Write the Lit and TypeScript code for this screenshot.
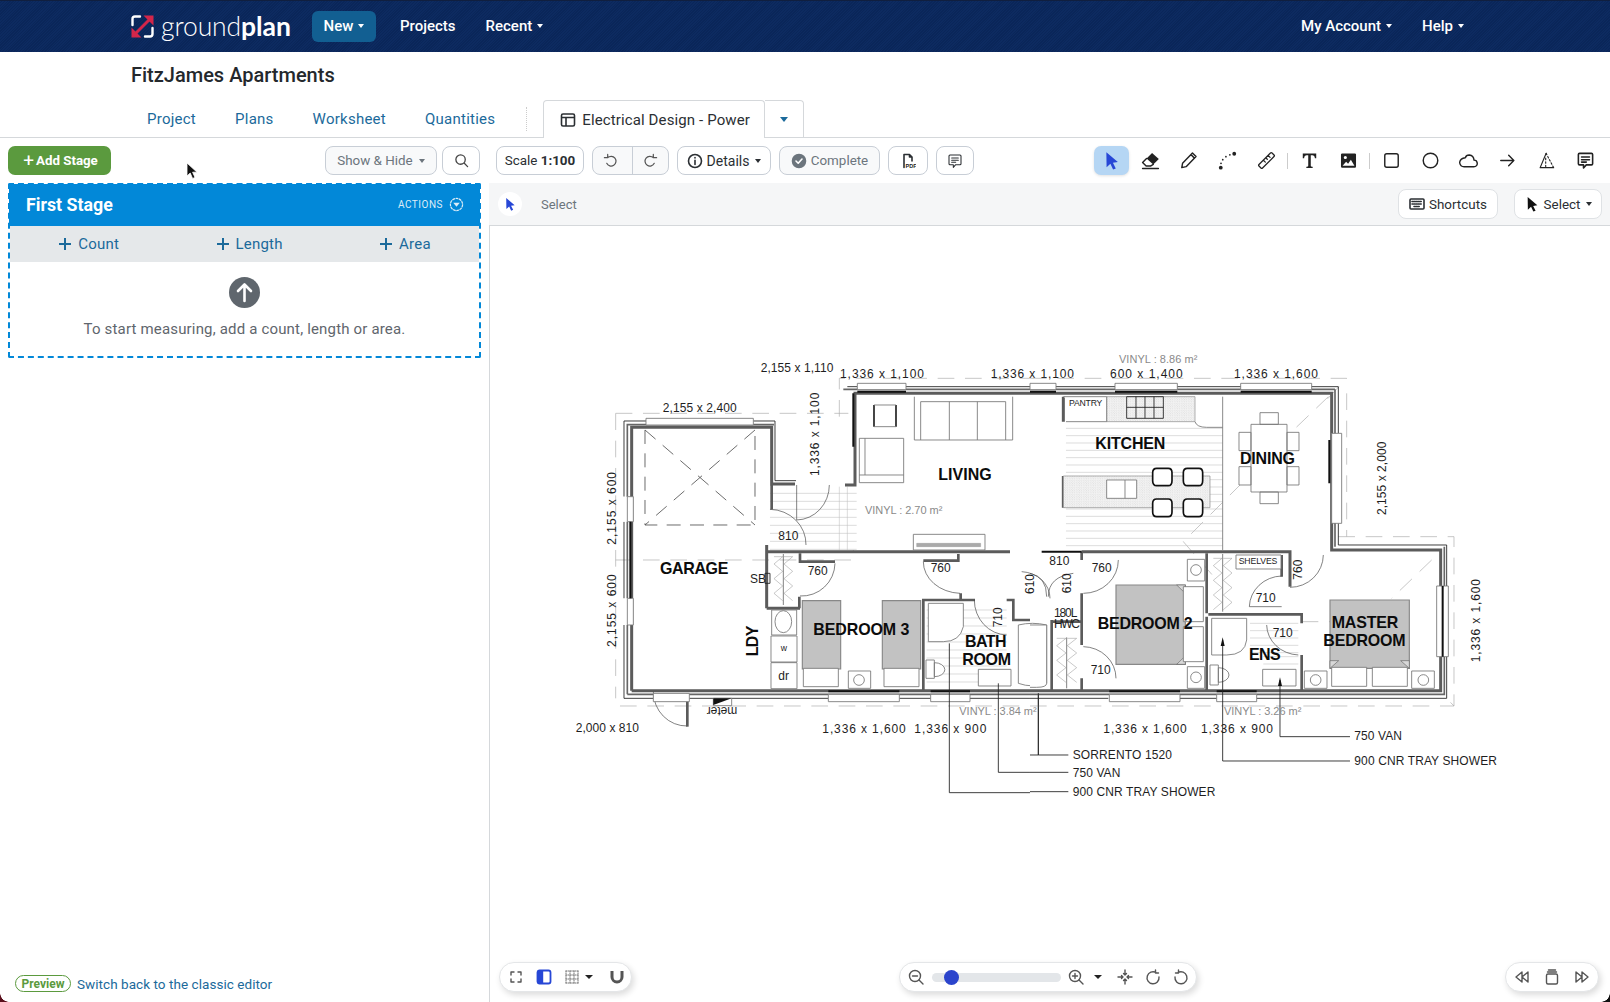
import { LitElement, html, css, svg } from "lit";
import { customElement } from "lit/decorators.js";

type P = [string, string];
const hatch = (x1: number, x2: number, y1: number, y2: number, s: number) => {
  let d = "";
  for (let y = y1; y <= y2; y += s) d += `M${x1} ${y}H${x2}`;
  return d;
};
const zig = (x1: number, x2: number, y1: number, y2: number, s: number) => {
  let d = `M${x1} ${y1}`;
  let i = 0;
  for (let y = y1; y <= y2; y += s) d += `L${i++ % 2 ? x1 : x2} ${y}`;
  return d;
};

const plan1: P[] = [
  ["dash", "M137 190H835M137 190V1045M137 630H850V600M808 200V85H1380M150 1068H1380"],
  ["hatch", hatch(600, 860, 430, 600, 24) + "M808 410V600M832 410V600"],
  ["hatch", hatch(1070, 1310, 780, 1010, 24)],
  ["robe", zig(612, 638, 620, 760, 22) + zig(642, 668, 620, 760, 22)],
  ["thin", "M640 612V765"],
  ["band", "M172 1033V224H612M172 1033H1380M820 118H1380"],
  ["wall", "M185 1022V232H605V402H675M825 405H855V130H1380M590 775V585M590 605H1320M590 775H690M185 1022H1380"],
  ["wallt", "M1060 1020V750H1215M1310 750H1330V810H1380M1172 730V750M1165 612V632H1060M690 610V635H795M688 740V775M605 478V405"],
  ["ink", "M162 440V213H228M550 213H615V392H678M162 1045H250M358 1045H775M988 1045H1082M1200 1045H1380M832 110H862M1008 110H1380M162 515V1045"],
  ["white", "M172 440V515M172 745V825M183 440V515M183 745V825M162 440V515M162 745V825"],
  ["fur", "M172 440H190V515H172ZM172 745H190V825H172Z"],
  ["thin", "M600 478A110 105 0 0 1 708 585M778 405A100 105 0 0 1 680 510V405M795 640A100 100 0 0 1 690 738M1060 635A115 95 0 0 0 1170 730M1213 750A100 105 0 0 0 1310 855M250 1025A100 103 0 0 0 352 1128M1355 665A90 80 0 0 1 1440 745"],
  ["wallt", "M352 1130V1030"],
  ["roof", "M225 240V525H555V240M225 240L555 525M555 240L225 525"],
  ["fur", "M862 100H1008V119H862ZM228 205H550V225H228ZM775 1033H988V1055H775ZM1082 1033H1200V1055H1082ZM250 1030H358V1055H250Z"],
  ["bar", "M181 515V745M850 130V290M862 125H1008M775 1024H988M1082 1024H1200"],
  ["fur", "M868 265H1001V398H868ZM868 375H1001M885 265V375M1033 140V270H1328V140M1052 155H1307M1052 155V270M1138 155V270M1222 155V270M1307 155V270"],
  ["inkb", "M912 165V230M978 165V230"],
  ["fur", "M912 165H978M912 230H978"],
  ["ink", "M585 670H600V700H585Z"],
  ["fur", "M1030 553H1245V600H1030ZM605 780H680V855H605ZM603 858H681V936H603ZM603 938H681V1016H603Z"],
  ["grayb", "M1040 580H1232V590H1040Z"],
  ["fur", "M640 782A25 33 0 1 0 640 848A25 33 0 1 0 640 782Z"],
  ["fur", "M835 963H902V1015H835ZM1225 958H1323V1008H1225ZM1345 825Q1387 815 1430 825V1000Q1387 1015 1345 1000ZM1075 760H1180V830Q1170 875 1120 875H1075ZM1068 930H1093V985H1068ZM1093 938A30 20 0 1 1 1093 980Z"],
  ["bed", "M697 752H812V957H697ZM937 752H1052V957H937Z"],
  ["fur", "M700 955H805V1010H700ZM942 955H1047V1010H942Z"],
  ["ink", "M1138 880V1328H1380M1285 1000V1267H1380M1405 1030V1215H1380"],
  ["fur", "M430 1045H485V1067H430Z"],
  ["solid", "M430 1045H485L430 1065Z"],
];

const plan2: P[] = [
  ["dash", "M0 85H950L880 160M950 130V560M925 560H1272V1068L1245 1040M0 1068H1272M895 140L780 250M635 400L460 575L560 690M1205 630L1085 745M815 815H900"],
  ["hatch", hatch(108, 578, 235, 600, 22)],
  ["hatch", hatch(660, 805, 820, 915, 22) + hatch(700, 805, 920, 950, 22)],
  ["robe", zig(550, 576, 625, 780, 22) + zig(580, 606, 625, 780, 22) + zig(80, 108, 865, 1010, 22) + zig(112, 140, 865, 1010, 22)],
  ["thin", "M578 612V785M110 862V1015"],
  ["band", "M915 118V590M1243 590V1033H0M0 118H915"],
  ["wall", "M0 130H905V600H1232V1022H0M155 605H780V710M100 140V215M100 378V473"],
  ["wallt", "M155 605V630M530 610V790M535 793H815V820M815 915V1020M65 810V1020M65 815H155M155 730V885M155 985V1020M530 800V1020M755 615V680"],
  ["ink", "M0 110H925V250M925 520V585H1250V1045H680M560 1045H450M235 1045H0"],
  ["fur", "M0 100H78V119H0ZM255 100H442V119H255ZM632 100H845V119H632ZM238 1033H450V1055H238ZM560 1033H680V1055H560ZM905 250H935V520H905ZM1220 708H1255V920H1220Z"],
  ["bar", "M0 125H78M255 125H442M632 125H845M1238 708V920M898 270V400M238 1024H450M560 1024H680M35 605H155"],
  ["counter", "M230 140H495V215H230ZM100 378H540V473H100Z"],
  ["fur", "M108 215H230M495 215Q500 232 530 232H578M578 140V600M100 140H230V215M230 390H320V445H230ZM285 390V445M618 615H753V657H618Z"],
  ["ink", "M290 140H400V205H290ZM345 140V205M290 172H400M318 140V205M372 140V205"],
  ["stool", "M380 355H415Q426 355 426 368V392Q426 407 415 407H380Q368 407 368 392V368Q368 355 380 355ZM472 355H507Q518 355 518 368V392Q518 407 507 407H472Q460 407 460 392V368Q460 355 472 355ZM380 447H415Q426 447 426 460V486Q426 500 415 500H380Q368 500 368 486V460Q368 447 380 447ZM472 447H507Q518 447 518 460V486Q518 500 507 500H472Q460 500 460 486V460Q460 447 472 447Z"],
  ["fur", "M663 223H771V426H663ZM690 188H745V223H690ZM690 426H745V461H690ZM627 247H663V302H627ZM627 350H663V405H627ZM771 247H807V302H771ZM771 350H807V405H771Z"],
  ["bed", "M258 705H466V943H258ZM900 750H1138V955H900Z"],
  ["fold", "M440 705H466V730ZM440 943H466V918ZM900 955V932H926ZM1138 955V932H1112Z"],
  ["fur", "M460 710H520V815H460ZM460 830H520V935H460ZM472 628H524V693H472ZM472 950H524V1015H472ZM905 952H1010V1009H905ZM1027 952H1132V1009H1027ZM823 963H891V1015H823ZM1145 963H1213V1015H1145Z"],
  ["fur", "M545 805H650V870Q645 915 590 915H545ZM540 945H565V1005H540ZM565 953A32 22 0 1 1 565 997ZM698 958H798V1008H698ZM0 825H50V1000Q50 1012 20 1012H0"],
  ["thin", "M265 630A105 100 0 0 1 160 730M160 890A100 95 0 0 1 258 985M780 712A100 98 0 0 0 880 615M755 678A100 95 0 0 0 658 770H755M710 825A100 92 0 0 0 805 915M50 740Q50 680 0 670M55 740Q55 680 130 670"],
  ["ink", "M578 870V1233H960M750 990V1160H960M25 1030V1215H115M0 1267H115M0 1325H115"],
  ["solid", "M578 862L572 888H584ZM750 982L744 1008H756Z"],
];

const circles1: [number, number, number][] = [[867, 990, 16]];
const circles2: [number, number, number][] = [[498, 660, 16], [498, 982, 16], [857, 990, 16], [1180, 990, 16]];

type T = [string, number, number, string?, number?];
const bold1: T[] = [["GARAGE", 270, 672, "", 205], ["LIVING", 1105, 390, "", 160], ["BEDROOM 3", 730, 855, "", 288], ["BATH", 1185, 890, "", 125], ["ROOM", 1177, 945, "", 146]];
const bold2: T[] = [["KITCHEN", 196, 297, "", 210], ["DINING", 630, 342, "", 165], ["BEDROOM 2", 203, 836, "", 285], ["MASTER", 905, 833, "", 200], ["BEDROOM", 880, 887, "", 247], ["ENS", 657, 930, "", 95]];
const dim1: T[] = [
  ["2,155 x 1,110", 572, 67, "", 218], ["1,336 x 1,100", 810, 85, "", 252], ["1,336 x 1,100", 1262, 85, "", 250], ["2,155 x 2,400", 278, 185, "", 222],
  ["2,000 x 810", 17, 1145, "", 190], ["810", 625, 571], ["760", 713, 675], ["760", 1082, 665],
  ["1,336 x 1,600", 757, 1149, "", 250], ["1,336 x 900", 1033, 1149, "", 216], ["dr", 625, 989], ["SB", 540, 699],
];
const dim2: T[] = [
  ["600 x 1,400", 240, 85, "", 218], ["1,336 x 1,600", 612, 85, "", 252], ["810", 58, 645], ["760", 185, 666], ["710", 677, 757], ["710", 728, 861], ["710", 182, 972],
  ["1,336 x 1,600", 220, 1149, "", 250], ["1,336 x 900", 513, 1149, "", 216], ["750 VAN", 973, 1171, "", 143], ["900 CNR TRAY SHOWER", 973, 1246, "", 428],
  ["SORRENTO 1520", 128, 1227, "", 298], ["750 VAN", 128, 1280, "", 143], ["900 CNR TRAY SHOWER", 128, 1338, "", 428],
  ["180L", 72, 800, "", 70], ["HWC", 72, 835, "", 78],
];
const rot1: T[] = [["1,336 x 1,100", 735, 253, "", 250], ["2,155 x 600", 125, 475, "", 218], ["2,155 x 600", 125, 782, "", 218], ["710", 1283, 805], ["610", 1380, 705], ["LDY", 552, 873, "b", 92]];
const rot2: T[] = [["2,155 x 2,000", 1055, 385, "", 220], ["1,336 x 1,600", 1338, 812, "", 250], ["610", 110, 703], ["760", 805, 662]];
const vinyl1: T[] = [["VINYL : 2.70 m²", 885, 491, "", 232], ["VINYL : 3.84 m²", 1168, 1095, "", 232]];
const vinyl2: T[] = [["VINYL : 8.86 m²", 267, 40, "", 235], ["VINYL : 3.26 m²", 582, 1095, "", 232]];

const drawPaths = (a: P[]) =>
  a.map(([c, d]) => (c === "counter" ? svg`<path class="cnt" fill="url(#sp)" d=${d}></path>` : svg`<path class=${c} d=${d}></path>`));
const drawText = (a: T[], cls: string) =>
  a.map(([s, x, y, , w]) => (w ? svg`<text class=${cls} x=${x} y=${y} textLength=${w}>${s}</text>` : svg`<text class=${cls} x=${x} y=${y}>${s}</text>`));
const drawRot = (a: T[]) =>
  a.map(([s, x, y, k, w]) =>
    w
      ? svg`<text class=${k ? "lbl" : "dim"} x=${x - w / 2} y=${y + 12} textLength=${w} transform="rotate(-90 ${x} ${y})">${s}</text>`
      : svg`<text class="dim" x=${x - 27} y=${y + 12} transform="rotate(-90 ${x} ${y})">${s}</text>`,
  );
const drawCircles = (a: [number, number, number][]) =>
  a.map(([x, y, r]) => svg`<circle class="fur" cx=${x} cy=${y} r=${r}></circle>`);

const caret = html`<span class="caret"></span>`;

const ic = (inner: unknown) => html`<svg class="ic" viewBox="0 0 24 24">${inner}</svg>`;

const arrowD = "M5.5 1.5L20 14L13.8 14.9L17.4 22L14 23.4L10.6 16.2L5.8 20.5Z";

const tools = [
  svg`<path fill="#2747d6" stroke="none" d=${arrowD}/>`,
  svg`<path fill="#222" stroke="none" d="M14 2.5L22.5 10L15.5 17L7 9.5Z"/><path d="M7 9.5L2 14.5L6.5 19H12L15.5 17M2 22H22"/>`,
  svg`<path d="M3.5 21L4.5 15.5L17 2.5L21.5 7L9 19.8ZM15 4.5L19.5 9"/>`,
  svg`<g fill="#222" stroke="none"><circle cx="3.5" cy="21" r="2.4"/><circle cx="3.8" cy="15.5" r="1.1"/><circle cx="6" cy="11" r="1.1"/><circle cx="10" cy="7.2" r="1.1"/><circle cx="15" cy="4.8" r="1.1"/><circle cx="20.5" cy="3.5" r="2.4"/></g>`,
  svg`<path stroke-width="1.6" d="M2.5 17L17 2.5Q18 1.5 19 2.5L21.5 5Q22.5 6 21.5 7L7 21.5Q6 22.5 5 21.5L2.5 19Q1.5 18 2.5 17ZM8 11.5L10.5 14M11 8.5L13 10.5M14 5.5L16.5 8"/>`,
  null,
  svg`<path fill="#222" stroke="none" d="M3.5 3H20.5V9H18.8C18.5 6.5 17.5 5.5 15.5 5.5H13.6V18.5C13.6 19.5 14.6 19.8 16 19.9V21.5H8V19.9C9.4 19.8 10.4 19.5 10.4 18.5V5.5H8.5C6.5 5.5 5.5 6.5 5.2 9H3.5Z"/>`,
  svg`<path fill="#222" stroke="none" fill-rule="evenodd" d="M4 3H20Q21.5 3 21.5 4.5V19.5Q21.5 21 20 21H4Q2.5 21 2.5 19.5V4.5Q2.5 3 4 3ZM4.5 18.5H19.5L15 11L11.5 16L9 13.5ZM8 6.2A2 2 0 1 0 8 10.2A2 2 0 1 0 8 6.2Z"/>`,
  null,
  svg`<rect x="3.5" y="3.5" width="17" height="17" rx="2.5"/>`,
  svg`<circle cx="12" cy="12" r="9.2"/>`,
  svg`<path d="M6.5 20H18.5Q23.5 19.5 23 15Q22.5 11.5 19 11.5Q18.5 5.5 13 5Q9 5 8 8.5Q1.5 9 .8 14.5Q1.5 19.5 6.5 20Z"/>`,
  svg`<path d="M3.5 12H20M13.5 5.5L20 12L13.5 18.5"/>`,
  svg`<path d="M11.5 3L4 21H21" stroke-width="1.5"/><path d="M11.5 3L21 21M11 9V21" stroke-width="1.4" stroke-dasharray="2 2.5"/>`,
  svg`<path stroke-width="2" d="M4.5 3H19.5Q21 3 21 4.5V16Q21 17.5 19.5 17.5H13L9.5 21.5V17.5H4.5Q3 17.5 3 16V4.5Q3 3 4.5 3ZM7 7.5H17M7 11H17M7 14H13"/>`,
];

@customElement("app-root")
export class AppRoot extends LitElement {
  static styles = css`
    :host {
      display: block;
      height: 100vh;
      overflow: hidden;
      background: #fff;
      font-family: "Roboto", "Liberation Sans", sans-serif;
      color: #2b2f33;
      --line: #d5d8db;
    }
    .page { display: flex; flex-direction: column; height: 100%; position: relative; }
    .corner { position: absolute; bottom: 0; width: 9px; height: 9px; }
    .corner.cl { left: 0; background: radial-gradient(circle at 100% 0, transparent 8.5px, #5a0f1c 9px); }
    .corner.cr { right: 0; background: radial-gradient(circle at 0 0, transparent 8.5px, #111 9px); }
    .top {
      height: 52px; flex: none; display: flex; align-items: center; padding-left: 131px; padding-right: 146px;
      background-color: #0a2659;
      background-image: repeating-linear-gradient(135deg, rgba(30, 70, 140, .14) 0 1px, transparent 1px 2px);
      border-top: 1px solid #101f3f; box-sizing: border-box; color: #fff; font-size: 15px; font-weight: 500;
    }
    .logo { display: flex; align-items: center; gap: 7px; width: 181px; }
    .logo svg { width: 23px; height: 23px; flex: none; }
    .logo span { font-family: "Lato", sans-serif; font-weight: 300; font-size: 26.5px; letter-spacing: -.1px; line-height: 1; }
    .logo b { font-weight: 700; }
    .new { width: 64px; height: 31px; box-sizing: border-box; padding-bottom: 2px; display: flex; align-items: center; justify-content: center; gap: 3px; border-radius: 6px; background: #125f92; }
    .nav { display: flex; align-items: center; gap: 3px; padding-bottom: 2px; }
    .nav.p { margin-left: 24px; }
    .nav.r { margin-left: 30px; }
    .spacer { flex: 1; }
    .nav.h { margin-left: 30px; }
    .caret { display: inline-block; border-left: 3.5px solid transparent; border-right: 3.5px solid transparent; border-top: 4px solid currentColor; margin-left: 2px; }
    .title { height: 48px; flex: none; padding-left: 131px; font-size: 20px; font-weight: 500; line-height: 47px; color: #24282c; }
    .tabs { height: 37px; flex: none; display: flex; align-items: center; padding-left: 147px; border-bottom: 1px solid var(--line); box-sizing: content-box; color: #1b6a9b; font-size: 15px; letter-spacing: .25px; }
    .tabs a { margin-right: 39px; }
    .tabs .sep { width: 0; height: 24px; border-left: 1px dotted #ccc; margin-left: -8px; margin-right: 16px; }
    .tab { height: 38px; display: flex; align-items: center; box-sizing: border-box; border: 1px solid var(--line); border-bottom: 0; background: #fff; border-radius: 4px 4px 0 0; margin-bottom: -1px; color: #2b2f33; padding-left: 16px; width: 222px; gap: 6px; letter-spacing: .12px; }
    .tab svg { width: 16px; height: 16px; fill: none; stroke: #2b2f33; stroke-width: 1.6; flex: none; }
    .tabdd { height: 37px; width: 39px; display: flex; align-items: center; justify-content: center; box-sizing: border-box; border: 1px solid var(--line); border-left: 0; border-bottom: 0; border-radius: 0 4px 0 0; color: #1b6a9b; }
    .tabdd .caret { border-left-width: 4.5px; border-right-width: 4.5px; border-top-width: 5px; margin: 0; }
    .bar { height: 45px; flex: none; display: flex; }
    .barl { width: 489px; flex: none; display: flex; align-items: center; box-sizing: border-box; padding: 0 9px 0 8px; gap: 5px; position: relative; }
    .barr { flex: 1; display: flex; align-items: center; padding-left: 7px; padding-right: 7.5px; gap: 8px; }
    .add { width: 103px; height: 29px; box-sizing: border-box; padding: 0 0 1px 2px; border-radius: 7px; background: #5b9a3e; color: #fff; font-weight: 700; font-size: 13.3px; display: flex; align-items: center; justify-content: center; gap: 2px; margin-right: auto; }
    .add i { font-style: normal; font-size: 19px; font-weight: 400; line-height: 1; }
    .btn { height: 29px; box-sizing: border-box; border: 1px solid #c8ced6; border-radius: 8px; background: #fff; display: flex; align-items: center; justify-content: center; font-size: 13.4px; color: #2b2f33; gap: 4px; }
    .btn.mut { background: #f8f9fa; color: #6c757d; }
    .btn svg { width: 16px; height: 16px; fill: none; stroke: #2b2f33; stroke-width: 1.6; stroke-linecap: round; stroke-linejoin: round; flex: none; }
    .btn.mut svg { stroke: #6c757d; }
    .w112 { width: 112px; } .w38 { width: 38px; } .w88 { width: 88px; } .w95 { width: 94px; font-size: 14px; } .w101 { width: 101px; } .w40 { width: 40px; }
    .btn b { font-weight: 700; }
    .seg { width: 77px; display: flex; padding: 0; background: #f8f9fa; }
    .seg span { flex: 1; display: flex; align-items: center; justify-content: center; height: 100%; }
    .seg span + span { border-left: 1px solid #c8ced6; }
    .btn.seg svg { stroke: #555; stroke-width: 1.3; width: 15px; height: 15px; }
    .btn.srch svg { stroke: #444; stroke-width: 1.4; width: 15px; height: 15px; }
    .cur { position: absolute; left: 186px; top: 24px; width: 13px; height: 18px; }
    .tools { margin-left: auto; display: flex; align-items: center; gap: 3.7px; }
    .tool { width: 35px; height: 29px; border-radius: 7px; display: flex; align-items: center; justify-content: center; }
    .tool.on { background: #b5d6f4; box-shadow: 0 1px 3px rgba(0, 0, 0, .12); }
    .ic { width: 19px; height: 19px; fill: none; stroke: #222; stroke-width: 1.8; stroke-linecap: round; stroke-linejoin: round; }
    .vsep { width: 1px; height: 16px; background: #ccc; }
    .body { flex: 1; min-height: 0; display: flex; }
    .left { width: 489px; flex: none; box-sizing: border-box; padding: 0 8px 10px; display: flex; flex-direction: column; }
    .stage { height: 175px; box-sizing: border-box; border: 2px dashed #0288d8; display: flex; flex-direction: column; border-radius: 2px; }
    .stitle { height: 42px; margin: -1px -1px 0; flex: none; background: #0288d8; color: #fff; display: flex; align-items: center; padding: 0 16px 2px 17px; box-sizing: border-box; font-size: 17.8px; font-weight: 700; }
    .act { margin-left: auto; font-size: 10px; font-weight: 400; letter-spacing: .5px; color: #dcecf7; display: flex; align-items: center; gap: 6px; }
    .act svg { width: 15px; height: 15px; fill: none; stroke: #dcecf7; stroke-width: 1.3; }
    .act svg path { fill: #dcecf7; stroke: none; }
    .adds { height: 36px; flex: none; background: #e5e8ea; display: flex; justify-content: space-around; align-items: center; color: #1b6a9b; font-size: 15px; }
    .adds span { display: flex; align-items: center; gap: 6px; letter-spacing: .2px; }
    .adds svg { width: 14px; height: 14px; stroke: #1b6a9b; stroke-width: 2; }
    .empty { flex: 1; display: flex; flex-direction: column; align-items: center; padding-top: 15px; gap: 12px; color: #5f666d; font-size: 15px; letter-spacing: .17px; }
    .empty svg { width: 31px; height: 31px; }
    .foot { margin-top: auto; display: flex; align-items: center; font-size: 13.5px; color: #1b6a9b; gap: 6px; padding-left: 7px; letter-spacing: .05px; }
    .pv { height: 17px; width: 56px; box-sizing: border-box; border: 1px solid #5b9a3e; border-radius: 9px; color: #5b9a3e; font-size: 12px; font-weight: 700; display: flex; align-items: center; justify-content: center; letter-spacing: 0; }
    .right { flex: 1; min-width: 0; border-left: 1px solid var(--line); display: flex; flex-direction: column; }
    .sub { height: 43px; flex: none; box-sizing: border-box; background: #f5f6f7; border-bottom: 1px solid var(--line); margin-left: -1px; display: flex; align-items: center; padding-right: 8px; gap: 16px; font-size: 13px; }
    .selc { width: 24px; height: 24px; border-radius: 50%; background: #fff; margin-left: 9px; display: flex; align-items: center; justify-content: center; }
    .selc svg { width: 14px; height: 14px; }
    .sub .lab { color: #6c757d; margin-left: 3px; margin-right: auto; font-size: 13px; }
    .sub .btn { height: 30px; color: #2b2f33; border-color: #dfe2e5; background: #fff; }
    .w100 { width: 100px; } .w88b { width: 88px; }
    .canvas { flex: 1; min-height: 0; position: relative; }
    .plan { position: absolute; inset: 0; width: 100%; height: 100%; }
    .plan path:not(.cnt) { fill: none; }
    .plan .cnt { stroke: #888; stroke-width: 2; }
    .dash { stroke: #aaa; stroke-width: 2; stroke-dasharray: 50 32; }
    .hatch { stroke: #bdbdbd; stroke-width: 1.6; }
    .robe { stroke: #999; stroke-width: 1.6; }
    .thin { stroke: #444; stroke-width: 2; }
    .ink { stroke: #222; stroke-width: 2.6; }
    .inkb { stroke: #222; stroke-width: 5; }
    .band { stroke: #666; stroke-width: 5; }
    .wall { stroke: #5b5b5b; stroke-width: 9; }
    .wallt { stroke: #5b5b5b; stroke-width: 8; }
    .white { stroke: #fff; stroke-width: 12; }
    path.bar { stroke: #111; stroke-width: 6; }
    .roof { stroke: #555; stroke-width: 2.6; stroke-dasharray: 42 28; }
    .fur { stroke: #777; stroke-width: 2.6; }
    .plan path.fur { fill: #fff; }
    .plan path.grayb { fill: #aaa; stroke: #888; stroke-width: 1; }
    .plan path.bed { fill: #c2c2c2; stroke: #888; stroke-width: 3.5; }
    .plan path.stool { stroke: #111; stroke-width: 5; fill: #fff; }
    .plan path.fold { fill: #d8d8d8; stroke: #666; stroke-width: 2; }
    .plan path.solid { fill: #111; }
    .plan circle.fur { fill: none; }
    .plan text { font-family: "Liberation Sans", Arial, sans-serif; }
    .dim { font-size: 36px; fill: #1e1e1e; }
    .lbl { font-size: 48px; font-weight: 700; fill: #0c0c0c; }
    .vin { font-size: 33px; fill: #8a8a8a; }
    .small { font-size: 26px; fill: #222; }
    .pill { position: absolute; bottom: 10px; height: 30px; box-sizing: border-box; background: #fff; border: 1px solid #e4e6e8; border-radius: 15px; box-shadow: 2px 3px 6px rgba(0, 0, 0, .14); display: flex; align-items: center; padding-left: 8px; }
    .pa { left: 9px; width: 133px; }
    .pb { left: 409px; width: 298px; }
    .pc { right: 11px; width: 94px; padding: 0 8px; justify-content: space-between; }
    .pill svg { width: 16px; height: 16px; fill: none; stroke: #555; stroke-width: 1.4; stroke-linecap: round; stroke-linejoin: round; flex: none; }
    .pill svg.grid { stroke: #777; stroke-width: 1; }
    .pill svg.mag { stroke: #555; stroke-width: 3; stroke-linecap: butt; }
    .pill .dd { display: inline-block; flex: none; border-left: 4px solid transparent; border-right: 4px solid transparent; border-top: 4px solid #222; }
    .m5 { margin-left: 5px; } .m7 { margin-left: 7px; } .m8 { margin-left: 8px; } .m10 { margin-left: 10px; } .m12 { margin-left: 12px; } .m15 { margin-left: 15px; } .m16 { margin-left: 16px; }
    .slider { width: 129px; height: 9px; flex: none; border-radius: 5px; background: #e3e6e9; position: relative; }
    .slider i { position: absolute; left: 12px; top: -3px; width: 15px; height: 15px; border-radius: 50%; background: #2b44cc; }
  `;

  render() {
    return html`<div class="page">
      <div class="top">
        <div class="logo">
          <svg viewBox="0 0 23 23" fill="none" stroke-linecap="round">
            <path stroke="#fff" stroke-width="2.4" d="M9 1.5H4Q1.5 1.5 1.5 4V10M14 21.5H19Q21.5 21.5 21.5 19V13"/>
            <path stroke="#d3264a" stroke-width="3" d="M5 18L18 5"/>
            <path fill="#d3264a" d="M12.5 .5H22.5V10.5ZM.5 22.5V12.5L10.5 22.5Z"/>
          </svg>
          <span>ground<b>plan</b></span>
        </div>
        <div class="new">New${caret}</div>
        <div class="nav p">Projects</div>
        <div class="nav r">Recent${caret}</div>
        <div class="spacer"></div>
        <div class="nav">My Account${caret}</div>
        <div class="nav h">Help${caret}</div>
      </div>
      <div class="title">FitzJames Apartments</div>
      <div class="tabs">
        <a>Project</a><a>Plans</a><a>Worksheet</a><a>Quantities</a><span class="sep"></span>
        <div class="tab">
          <svg viewBox="0 0 16 16"><rect x="1.5" y="2" width="13" height="12" rx="1.5"/><path d="M1.5 5.5H14.5M6 5.5V14"/></svg>
          Electrical Design - Power
        </div>
        <div class="tabdd">${caret}</div>
      </div>
      <div class="bar">
        <div class="barl">
          <div class="add"><i>+</i>Add Stage</div>
          <div class="btn mut w112">Show &amp; Hide${caret}</div>
          <div class="btn w38 srch"><svg viewBox="0 0 16 16"><circle cx="7" cy="7" r="5"/><path d="M11 11L14.5 14.5"/></svg></div>
          <svg class="cur" viewBox="0 0 13 18"><path fill="#111" stroke="#fff" stroke-width=".8" d="M1 1L1 14L4.2 11L6.6 16.5L9 15.4L6.6 10.2H11Z"/></svg>
        </div>
        <div class="barr">
          <div class="btn w88"><span>Scale <b>1:100</b></span></div>
          <div class="btn seg">
            <span><svg viewBox="0 0 16 16"><path d="M5 5A5.2 5.2 0 1 1 4 11M5 1.5V5H1.5"/></svg></span>
            <span><svg viewBox="0 0 16 16"><path d="M11 5A5.2 5.2 0 1 0 12 11M11 1.5V5H14.5"/></svg></span>
          </div>
          <div class="btn w95"><svg viewBox="0 0 16 16"><circle cx="8" cy="8" r="6.5"/><path d="M8 7.2V11.5M8 4.6V4.9"/></svg>Details${caret}</div>
          <div class="btn mut w101"><svg viewBox="0 0 16 16"><circle cx="8" cy="8" r="6.5" fill="#6c757d"/><path stroke="#fff" d="M5 8L7.2 10.2L11 6"/></svg>Complete</div>
          <div class="btn w40"><svg viewBox="0 0 16 16"><path d="M4 14.5V1.5H9.5L12 4V8M12 4H9.5V1.5"/><text x="5.5" y="15" font-size="5.5" font-weight="700" font-family="Liberation Sans" fill="#222" stroke="none">PDF</text></svg></div>
          <div class="btn w38"><svg viewBox="0 0 24 24" stroke-width="2.2"><path d="M4.5 3H19.5Q21 3 21 4.5V16Q21 17.5 19.5 17.5H13L9.5 21.5V17.5H4.5Q3 17.5 3 16V4.5Q3 3 4.5 3ZM7 7.5H17M7 11H17M7 14H13"/></svg></div>
          <div class="tools">
            ${tools.map((t, i) => (t === null ? html`<span class="vsep"></span>` : html`<span class="tool ${i === 0 ? "on" : ""}">${ic(t)}</span>`))}
          </div>
        </div>
      </div>
      <div class="body">
        <div class="left">
          <div class="stage">
            <div class="stitle">First Stage
              <span class="act">ACTIONS <svg viewBox="0 0 16 16"><circle cx="8" cy="8" r="6.5" stroke-dasharray="3 .6"/><path d="M4.5 6H11.5L8 10.5Z"/></svg></span>
            </div>
            <div class="adds">
              <span><svg viewBox="0 0 14 14"><path d="M7 1V13M1 7H13"/></svg>Count</span>
              <span><svg viewBox="0 0 14 14"><path d="M7 1V13M1 7H13"/></svg>Length</span>
              <span><svg viewBox="0 0 14 14"><path d="M7 1V13M1 7H13"/></svg>Area</span>
            </div>
            <div class="empty">
              <svg viewBox="0 0 31 31"><circle cx="15.5" cy="15.5" r="15.5" fill="#5f666d"/><path fill="none" stroke="#fff" stroke-width="2.6" stroke-linecap="round" stroke-linejoin="round" d="M15.5 24V8M9 14L15.5 7.5L22 14"/></svg>
              To start measuring, add a count, length or area.
            </div>
          </div>
          <div class="foot"><span class="pv">Preview</span>Switch back to the classic editor</div>
        </div>
        <div class="right">
          <div class="sub">
            <span class="selc"><svg viewBox="0 0 24 24"><path fill="#2747d6" d=${arrowD}/></svg></span>
            <span class="lab">Select</span>
            <div class="btn w100"><svg viewBox="0 0 16 16" stroke-width="1.2"><rect x="1" y="3" width="14" height="10" rx="1"/><path d="M3 5.5H13M3 8H13M5 10.5H11" stroke-dasharray="1.2 .8"/></svg>Shortcuts</div>
            <div class="btn w88b"><svg viewBox="0 0 24 24"><path fill="#111" stroke="none" d=${arrowD}/></svg>Select${caret}</div>
          </div>
          <div class="canvas">
            <svg class="plan" viewBox="490 226 1120 776">
              <defs>
                <pattern id="sp" width="7" height="7" patternUnits="userSpaceOnUse">
                  <rect width="7" height="7" fill="#f2f2f2"></rect>
                  <circle cx="1.5" cy="2" r=".9" fill="#aaa"></circle>
                  <circle cx="5" cy="5.5" r=".9" fill="#bbb"></circle>
                </pattern>
              </defs>
              <g transform="translate(570 350) scale(.33333)">
                ${drawPaths(plan1)}${drawCircles(circles1)}
                ${drawText(dim1, "dim")}${drawText(bold1, "lbl")}${drawText(vinyl1, "vin")}${drawRot(rot1)}
                <text class="small" x="632" y="904">w</text>
                <text class="dim" x="0" y="0" transform="rotate(180 457 1082) translate(412 1094)" textLength="92">meter</text>
              </g>
              <g transform="translate(1030 350) scale(.33333)">
                ${drawPaths(plan2)}${drawCircles(circles2)}
                ${drawText(dim2, "dim")}${drawText(bold2, "lbl")}${drawText(vinyl2, "vin")}${drawRot(rot2)}
                <text class="small" x="117" y="167" textLength="100">PANTRY</text>
                <text class="small" x="626" y="641" textLength="116">SHELVES</text>
              </g>
            </svg>
            <div class="pill pa">
              <svg viewBox="0 0 16 16"><path d="M3 6V3H6M10 3H13V6M13 10V13H10M6 13H3V10"/></svg>
              <svg class="m12" viewBox="0 0 16 16"><rect x="1.5" y="1.5" width="13" height="13" rx="2" stroke="#2747d6" stroke-width="1.8"/><path fill="#2747d6" stroke="#2747d6" d="M2 2H6.5V14H2Z"/></svg>
              <svg class="m12 grid" viewBox="0 0 16 16" stroke-dasharray="1 1.2"><path d="M2 2H14M2 6H14M2 10H14M2 14H14M2 2V14M6 2V14M10 2V14M14 2V14"/></svg>
              <span class="dd m5"></span>
              <svg class="m16 mag" viewBox="0 0 16 16"><path d="M3 2V8A5 5 0 0 0 13 8V2"/></svg>
            </div>
            <div class="pill pb">
              <svg viewBox="0 0 16 16"><circle cx="7" cy="7" r="5.5"/><path d="M11 11L15 15M4.5 7H9.5"/></svg>
              <div class="slider m8"><i></i></div>
              <svg class="m7" viewBox="0 0 16 16"><circle cx="7" cy="7" r="5.5"/><path d="M11 11L15 15M4.5 7H9.5M7 4.5V9.5"/></svg>
              <span class="dd m10"></span>
              <svg class="m15" viewBox="0 0 16 16"><path d="M8 1V6M6.5 4.5L8 6L9.5 4.5M8 15V10M6.5 11.5L8 10L9.5 11.5M1 8H6M4.5 6.5L6 8L4.5 9.5M15 8H10M11.5 6.5L10 8L11.5 9.5"/></svg>
              <svg class="m12" viewBox="0 0 16 16"><path d="M11 3.5A6 6 0 1 0 14 8M10.5 1V4H13.5"/></svg>
              <svg class="m12" viewBox="0 0 16 16"><path d="M5 3.5A6 6 0 1 1 2 8M5.5 1V4H2.5"/></svg>
            </div>
            <div class="pill pc">
              <svg viewBox="0 0 16 16"><path d="M8 3L2 8L8 13ZM14 3L8 8L14 13Z"/></svg>
              <svg viewBox="0 0 16 16"><rect x="2.5" y="5" width="11" height="10" rx="1.5"/><path d="M3.5 3H12.5M4.5 1H11.5"/></svg>
              <svg viewBox="0 0 16 16"><path d="M8 3L14 8L8 13ZM2 3L8 8L2 13Z"/></svg>
            </div>
          </div>
        </div>
      </div>
      <span class="corner cl"></span><span class="corner cr"></span>
    </div>`;
  }
}
